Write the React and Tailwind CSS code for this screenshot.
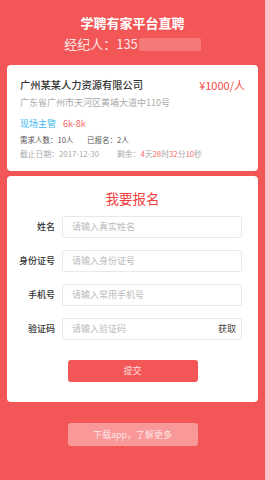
export default function App() {
  const fields = [
    { label: '姓名', placeholder: '请输入真实姓名' },
    { label: '身份证号', placeholder: '请输入身份证号' },
    { label: '手机号', placeholder: '请输入常用手机号' },
  ]

  return (
    <div
      className="w-[265px] h-[480px] bg-[#f25656] overflow-hidden"
      style={{ fontFamily: '"Noto Sans CJK SC", "Noto Sans", sans-serif' }}
    >
      {/* Header */}
      <div className="pt-[14px] flex flex-col items-center">
        <h1 className="text-[13px] leading-[18px] font-bold text-white">学聘有家平台直聘</h1>
        <div className="mt-[3px] flex items-center text-[13px] leading-[18px] text-[#fde4e4]">
          <span>经纪人：135</span>
          <span className="ml-[1px] w-[62px] h-[13px] bg-[#f47a7a] rounded-[2px]" />
        </div>
      </div>

      {/* Job card */}
      <div className="mx-[7px] mt-[12px] bg-white rounded-[4px] px-[13px] pt-[13px] pb-[11px]">
        <div className="flex justify-between items-center">
          <span className="text-[10.25px] leading-[14px] font-medium text-[#333]">广州某某人力资源有限公司</span>
          <span className="text-[11px] leading-[14px] text-[#f04848]">¥1000/人</span>
        </div>
        <div className="mt-[4px] text-[9px] leading-[13px] text-[#aaa]">广东省广州市天河区黄埔大道中110号</div>
        <div className="mt-[8px] flex items-center text-[9px] leading-[13px]">
          <span className="text-[#41b8ef]">现场主管</span>
          <span className="ml-[7px] text-[#f86a6a]">6k-8k</span>
        </div>
        <div className="mt-[4px] flex text-[7.5px] leading-[12px] text-[#555]">
          <span className="w-[67px]">需求人数：10人</span>
          <span>已报名：2人</span>
        </div>
        <div className="mt-[2px] flex text-[7.8px] leading-[12px] text-[#aaa]">
          <span className="w-[97px]">截止日期：2017-12-30</span>
          <span>
            剩余：<span className="text-[#f86a6a]">4</span>天<span className="text-[#f86a6a]">28</span>时<span className="text-[#f86a6a]">32</span>分<span className="text-[#f86a6a]">10</span>秒
          </span>
        </div>
      </div>

      {/* Form card */}
      <div className="mx-[7px] mt-[5px] bg-white rounded-[4px] pt-[13px] pb-[20px]">
        <h2 className="text-center text-[13.5px] leading-[18px] text-[#f04040]">我要报名</h2>
        <div className="mt-[9px] flex flex-col gap-[12px]">
          {fields.map(f => (
            <div key={f.label} className="flex items-center">
              <span className="w-[48px] text-right text-[9px] font-medium text-[#333]">{f.label}</span>
              <div className="ml-[7px] w-[180px] h-[22px] border border-[#e8e8e8] rounded-[3px] flex items-center px-[9px] text-[9px] text-[#bbb]">
                {f.placeholder}
              </div>
            </div>
          ))}
          <div className="flex items-center">
            <span className="w-[48px] text-right text-[9px] font-medium text-[#333]">验证码</span>
            <div className="ml-[7px] w-[180px] h-[22px] border border-[#e8e8e8] rounded-[3px] flex items-center justify-between pl-[9px] pr-[5px] text-[9px]">
              <span className="text-[#bbb]">请输入验证码</span>
              <span className="text-[#444]">获取</span>
            </div>
          </div>
        </div>
        <div className="mt-[20px] flex justify-center">
          <button className="w-[130px] h-[22px] bg-[#f25656] rounded-[3px] text-[9px] text-[#fde0e0]">提交</button>
        </div>
      </div>

      {/* Download */}
      <div className="mt-[21px] flex justify-center">
        <button className="w-[130px] h-[23px] bg-[#f89898] rounded-[3px] text-[9px] text-[#fde6e6]">下载app，了解更多</button>
      </div>
    </div>
  )
}
